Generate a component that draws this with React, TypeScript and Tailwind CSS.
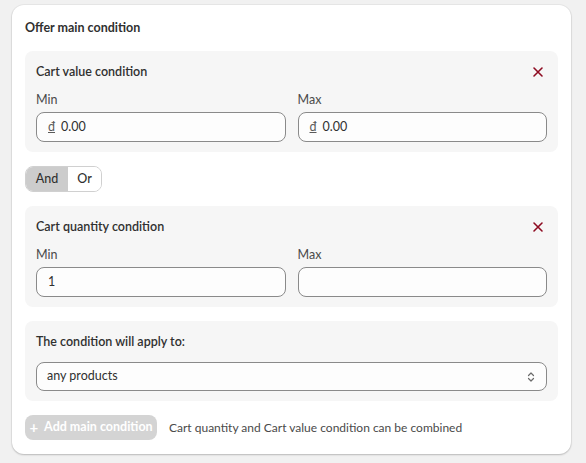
import React from 'react';

const XIcon = () => (
  <svg width="12" height="12" viewBox="0 0 12 12" fill="none" stroke="#8e0b21" strokeWidth="1.6" strokeLinecap="round">
    <path d="M2 2l8 8M10 2l-8 8" />
  </svg>
);

const Field = ({ label, value, prefix }: { label: string; value: string; prefix?: boolean }) => (
  <div className="flex flex-1 flex-col gap-[4px]">
    <span className="text-[12.5px] leading-[16px] text-[#4a4a4a]">{label}</span>
    <div className="flex h-[30px] items-center gap-[6px] rounded-[8px] border border-[#8a8a8a] bg-[#fdfdfd] px-[11px] text-[12.5px] text-[#303030]">
      {prefix && <span className="text-[#5a5a5a] underline">đ</span>}
      <span>{value}</span>
    </div>
  </div>
);

const ConditionBox = ({ title, min, max, prefix }: { title: string; min: string; max: string; prefix?: boolean }) => (
  <div className="flex flex-col gap-[11px] rounded-[8px] bg-[#f6f6f6] px-[11px] pb-[10px] pt-[12px]">
    <div className="flex h-[18px] items-center justify-between">
      <span className="text-[12.5px] font-semibold text-[#303030]">{title}</span>
      <span className="mr-[3px]"><XIcon /></span>
    </div>
    <div className="flex gap-[12px]">
      <Field label="Min" value={min} prefix={prefix} />
      <Field label="Max" value={max} prefix={prefix} />
    </div>
  </div>
);

export default function App() {
  return (
    <div className="min-h-screen bg-[#f1f1f1] pt-[5px] pl-[12px]" style={{ fontFamily: 'Lato, "Noto Sans", sans-serif' }}>
      <div className="flex w-[559px] flex-col gap-[14px] rounded-[12px] bg-white px-[13px] py-[14px] shadow-[0_1px_2px_rgba(0,0,0,0.2),0_0_0_1px_rgba(0,0,0,0.04)]">
        <div className="flex h-[18px] items-center text-[12.5px] font-bold text-[#303030]">Offer main condition</div>

        <ConditionBox title="Cart value condition" min="0.00" max="0.00" prefix />

        <div className="flex">
          <div className="flex h-[26px] overflow-hidden rounded-[8px] border border-[#d0d0d0] text-[12.5px] font-medium text-[#303030]">
            <div className="flex w-[42px] items-center justify-center bg-[#cccccc]">And</div>
            <div className="flex w-[33px] items-center justify-center bg-white">Or</div>
          </div>
        </div>

        <ConditionBox title="Cart quantity condition" min="1" max="" />

        <div className="flex flex-col gap-[11px] rounded-[8px] bg-[#f6f6f6] px-[11px] pb-[10px] pt-[12px]">
          <div className="flex h-[18px] items-center text-[12.5px] font-semibold text-[#303030]">The condition will apply to:</div>
          <div className="flex h-[29px] items-center justify-between rounded-[8px] border border-[#8a8a8a] bg-[#fdfdfd] px-[10px] text-[12.5px] text-[#303030]">
            <span>any products</span>
            <svg width="10" height="12" viewBox="0 0 10 12" fill="none" stroke="#6b6b6b" strokeWidth="1.2" strokeLinecap="round" strokeLinejoin="round">
              <path d="M2.5 4.5L5 2l2.5 2.5M2.5 7.5L5 10l2.5-2.5" />
            </svg>
          </div>
        </div>

        <div className="flex items-center gap-[12px]">
          <button className="flex h-[25px] w-[132px] items-center justify-center gap-[6px] rounded-[8px] bg-[#d4d4d4] text-[12.5px] font-bold text-white">
            <span className="text-[15px] leading-none">+</span>
            <span>Add main condition</span>
          </button>
          <span className="text-[12px] text-[#4a4a4a]">Cart quantity and Cart value condition can be combined</span>
        </div>
      </div>
    </div>
  );
}
